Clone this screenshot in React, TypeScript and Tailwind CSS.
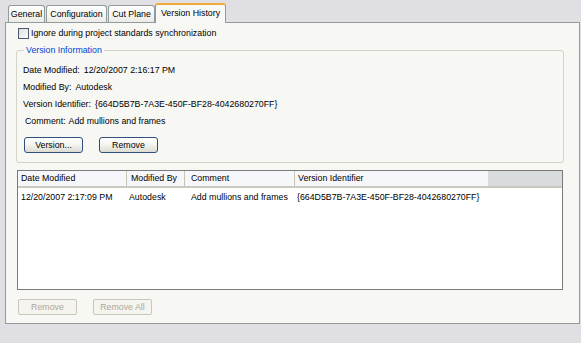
export default function App() {
  const btn =
    "flex h-[16px] w-[59px] items-center justify-center rounded-[3px] border border-[#2f4f7f] bg-gradient-to-b from-[#ffffff] via-[#f3f3ef] to-[#dcdcd2] text-black";
  const dbtn =
    "flex h-[16px] w-[59px] items-center justify-center rounded-[2px] border border-[#c9c7ba] bg-[#f5f4ee] text-[#aca899]";
  const tab =
    "flex h-[17px] items-center justify-center rounded-t-[3px] border border-b-0 border-[#919b9c] bg-gradient-to-b from-[#ffffff] to-[#ecebe6] text-black";
  return (
    <div className="h-[343px] w-[581px] overflow-hidden bg-[#e0e0e4] font-['Liberation_Sans',Arial,sans-serif] text-[8.8px] leading-none text-black">
      {/* tabs */}
      <div className="flex h-[22px] items-end pl-[8px]">
        <div className={tab + " w-[37px]"}>General</div>
        <div className={tab + " ml-[1px] w-[61px]"}>Configuration</div>
        <div className={tab + " ml-[1px] w-[47px]"}>Cut Plane</div>
        <div className="relative z-10 -mb-px flex h-[20px] w-[71px] items-center justify-center rounded-t-[3px] border border-b-0 border-t-2 border-[#919b9c] border-t-[#f2a93e] bg-[#f8f8f6] pb-[1px] text-black">
          Version History
        </div>
      </div>
      {/* panel */}
      <div className="ml-[5px] flex h-[302px] w-[575px] flex-col border border-[#919b9c] bg-[#f7f7f4]">
        {/* checkbox */}
        <div className="ml-[12px] mt-[5px] flex h-[11px] items-center gap-[2px]">
          <div className="h-[11px] w-[11px] border border-[#4a5a70] bg-gradient-to-br from-[#dcdcd7] to-[#ffffff]" />
          <span>Ignore during project standards synchronization</span>
        </div>
        {/* group box */}
        <fieldset className="ml-[10px] mt-[6px] w-[548px] rounded-[3px] border border-[#d3d3c8] px-[6px] pb-[9px]">
          <legend className="ml-[1px] px-[2px] leading-[11px] text-[#0046d5]">Version Information</legend>
          <div className="mt-[6px] flex flex-col">
            <div className="flex h-[17px] items-center gap-[4px]">
              <span>Date Modified:</span>
              <span>12/20/2007 2:16:17 PM</span>
            </div>
            <div className="flex h-[17px] items-center gap-[4px]">
              <span>Modified By:</span>
              <span>Autodesk</span>
            </div>
            <div className="flex h-[17px] items-center gap-[4px]">
              <span>Version Identifier:</span>
              <span>{"{664D5B7B-7A3E-450F-BF28-4042680270FF}"}</span>
            </div>
            <div className="flex h-[17px] items-center gap-[3px] pl-[2px]">
              <span>Comment:</span>
              <span>Add mullions and frames</span>
            </div>
          </div>
          <div className="ml-[1px] mt-[7px] flex gap-[16px]">
            <div className={btn}>Version...</div>
            <div className={btn}>Remove</div>
          </div>
        </fieldset>
        {/* list view */}
        <div className="ml-[11px] mt-[7px] flex h-[120px] w-[546px] flex-col border border-[#7a7a7a] bg-white">
          <div className="flex h-[17px] border-b-2 border-[#c9c9c0]">
            <div className="flex w-[108px] items-center bg-[#f6f7fb] pl-[3px]">Date Modified</div>
            <div className="flex w-[58px] items-center border-l border-[#c7c5b2] bg-[#f6f7fb] pl-[4px]">Modified By</div>
            <div className="flex w-[110px] items-center border-l border-[#c7c5b2] bg-[#f6f7fb] pl-[6px]">Comment</div>
            <div className="flex w-[194px] items-center border-l border-[#c7c5b2] bg-[#f6f7fb] pl-[3px]">Version Identifier</div>
            <div className="flex-1 bg-[#d9dcdc]" />
          </div>
          <div className="flex h-[18px] items-center">
            <div className="w-[108px] pl-[3px]">12/20/2007 2:17:09 PM</div>
            <div className="w-[58px] pl-[3px]">Autodesk</div>
            <div className="w-[110px] pl-[7px]">Add mullions and frames</div>
            <div className="w-[194px] pl-[3px]">{"{664D5B7B-7A3E-450F-BF28-4042680270FF}"}</div>
          </div>
        </div>
        {/* bottom buttons */}
        <div className="ml-[12px] mt-[9px] flex gap-[16px]">
          <div className={dbtn}>Remove</div>
          <div className={dbtn}>Remove All</div>
        </div>
      </div>
    </div>
  );
}
